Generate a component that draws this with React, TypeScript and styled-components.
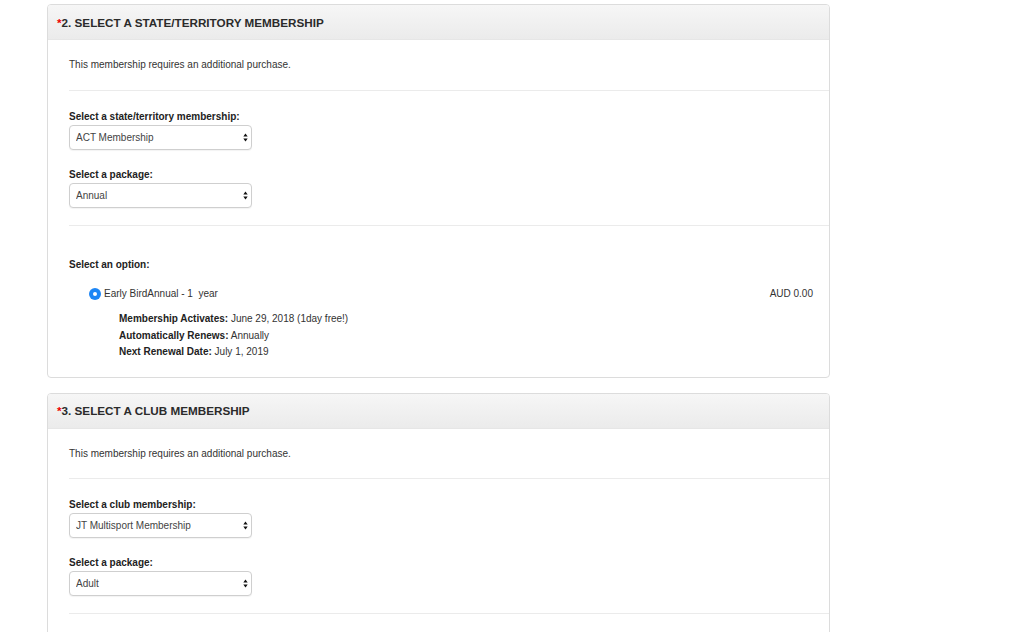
import React from "react";
import styled, { createGlobalStyle } from "styled-components";

const Global = createGlobalStyle`
  html, body { margin: 0; padding: 0; background: #fff; }
  body { font-family: "Liberation Sans", Arial, Helvetica, sans-serif; color: #333; }
`;

const Page = styled.div`
  padding: 4px 0 0 47px;
  display: flex;
  flex-direction: column;
  gap: 15px;
  height: 632px;
  overflow: hidden;
  box-sizing: border-box;
`;

const Panel = styled.section`
  width: 783px;
  border: 1px solid #dcdcdc;
  border-radius: 4px;
  box-sizing: border-box;
  background: #fff;
  flex-shrink: 0;
  overflow: hidden;
`;

const Header = styled.div`
  height: 35px;
  display: flex;
  align-items: center;
  padding-left: 9px;
  background: linear-gradient(#f6f6f6, #ebebeb);
  border-bottom: 1px solid #e6e6e6;
  box-sizing: border-box;
`;

const Title = styled.h2`
  margin: 0;
  font-size: 11.7px;
  font-weight: bold;
  text-transform: uppercase;
  color: #2b2b2b;
`;

const Req = styled.span`
  color: #e00;
`;

const Section = styled.div<{ $top: number; $bottom: number; $last?: boolean }>`
  margin-left: 21px;
  padding: ${(p) => p.$top}px 0 ${(p) => p.$bottom}px;
  border-bottom: ${(p) => (p.$last ? "none" : "1px solid #ebebeb")};
  font-size: 10px;
  line-height: 14px;
`;

const Text = styled.p`
  margin: 0;
`;

const Field = styled.div<{ $gap?: number }>`
  display: flex;
  flex-direction: column;
  gap: 1px;
  margin-top: ${(p) => p.$gap ?? 0}px;
`;

const Label = styled.label`
  font-weight: bold;
  color: #222;
`;

const SelectWrap = styled.div`
  position: relative;
  width: 183px;
  height: 25px;
`;

const Select = styled.select`
  appearance: none;
  -webkit-appearance: none;
  width: 100%;
  height: 100%;
  box-sizing: border-box;
  border: 1px solid #cfcfcf;
  border-radius: 4px;
  background: #fff;
  box-shadow: 0 1px 1px rgba(0, 0, 0, 0.05);
  padding: 0 20px 0 6px;
  font-family: inherit;
  font-size: 10px;
  color: #444;
`;

const Arrows = styled.svg`
  position: absolute;
  right: 4px;
  top: 8px;
  pointer-events: none;
`;

const OptionRow = styled.div`
  display: flex;
  align-items: center;
  margin: 15px 16px 0 20px;
`;

const Radio = styled.span`
  width: 12px;
  height: 12px;
  border-radius: 50%;
  background: #1d86f5;
  display: flex;
  align-items: center;
  justify-content: center;
  margin-right: 3px;
  flex-shrink: 0;
  &::after {
    content: "";
    width: 4px;
    height: 4px;
    border-radius: 50%;
    background: #fff;
  }
`;

const OptionText = styled.span`
  flex: 1;
  color: #333;
  white-space: pre;
`;

const Price = styled.span`
  color: #333;
`;

const Details = styled.div`
  margin: 10px 0 0 50px;
  line-height: 16.5px;
`;

const Key = styled.b`
  color: #222;
`;

const Spacer = styled.div`
  height: 60px;
`;

function SelectBox({ value }: { value: string }) {
  return (
    <SelectWrap>
      <Select defaultValue={value}>
        <option>{value}</option>
      </Select>
      <Arrows width="5" height="9" viewBox="0 0 5 9">
        <path d="M2.5 0.5 L4.7 3.5 L0.3 3.5 Z" fill="#111" />
        <path d="M2.5 8.5 L4.7 5.5 L0.3 5.5 Z" fill="#111" />
      </Arrows>
    </SelectWrap>
  );
}

export default function App() {
  return (
    <>
      <Global />
      <Page>
        <Panel>
          <Header>
            <Title>
              <Req>*</Req>2. Select a State/Territory Membership
            </Title>
          </Header>
          <Section $top={18} $bottom={18}>
            <Text>This membership requires an additional purchase.</Text>
          </Section>
          <Section $top={19} $bottom={17}>
            <Field>
              <Label>Select a state/territory membership:</Label>
              <SelectBox value="ACT Membership" />
            </Field>
            <Field $gap={18}>
              <Label>Select a package:</Label>
              <SelectBox value="Annual" />
            </Field>
          </Section>
          <Section $top={32} $bottom={16} $last>
            <Label as="div">Select an option:</Label>
            <OptionRow>
              <Radio />
              <OptionText>Early BirdAnnual - 1  year</OptionText>
              <Price>AUD 0.00</Price>
            </OptionRow>
            <Details>
              <div>
                <Key>Membership Activates:</Key> June 29, 2018 (1day free!)
              </div>
              <div>
                <Key>Automatically Renews:</Key> Annually
              </div>
              <div>
                <Key>Next Renewal Date:</Key> July 1, 2019
              </div>
            </Details>
          </Section>
        </Panel>
        <Panel>
          <Header>
            <Title>
              <Req>*</Req>3. Select a Club Membership
            </Title>
          </Header>
          <Section $top={18} $bottom={17}>
            <Text>This membership requires an additional purchase.</Text>
          </Section>
          <Section $top={19} $bottom={17}>
            <Field>
              <Label>Select a club membership:</Label>
              <SelectBox value="JT Multisport Membership" />
            </Field>
            <Field $gap={18}>
              <Label>Select a package:</Label>
              <SelectBox value="Adult" />
            </Field>
          </Section>
          <Spacer />
        </Panel>
      </Page>
    </>
  );
}
